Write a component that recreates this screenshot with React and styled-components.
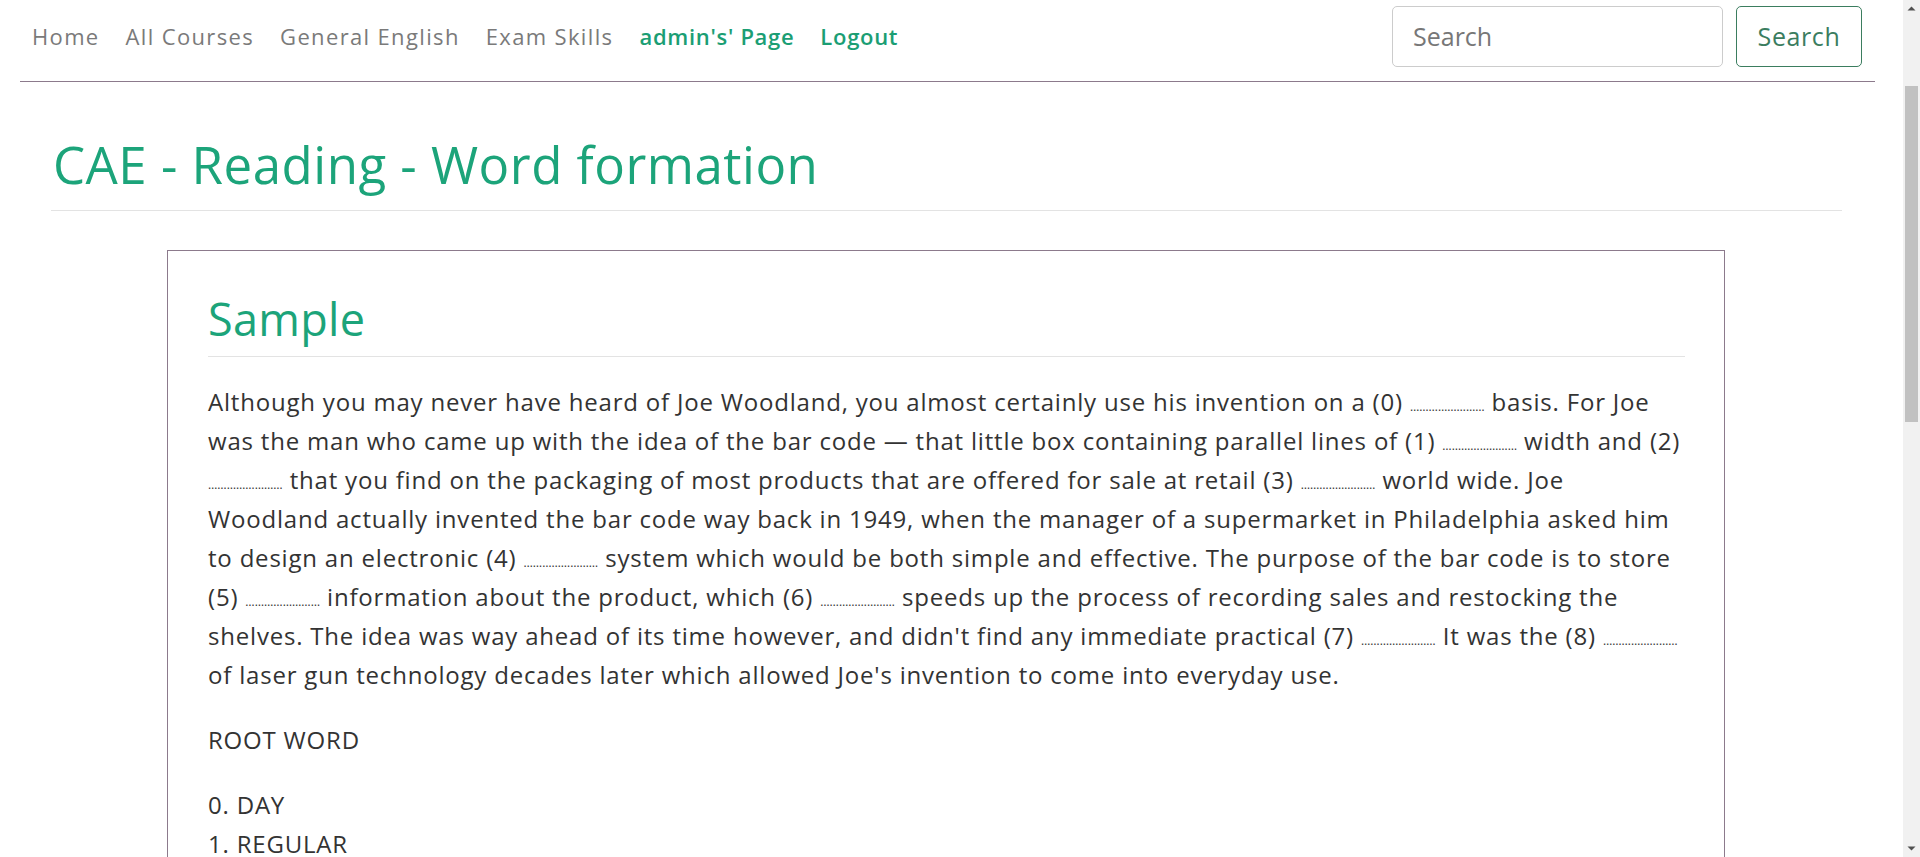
import React, { useState } from 'react';
import styled, { createGlobalStyle } from 'styled-components';

const GlobalStyle = createGlobalStyle`
  html, body {
    margin: 0;
    padding: 0;
    background: #fff;
  }
  body {
    font-family: "Open Sans", Lato, sans-serif;
    color: #333;
    padding-right: 17px;
  }
  * {
    box-sizing: border-box;
  }
`;

const links = [
  { label: 'Home' },
  { label: 'All Courses' },
  { label: 'General English' },
  { label: 'Exam Skills' },
  { label: "admin's' Page", active: true },
  { label: 'Logout', active: true },
];

const rootWords = [
  '0. DAY',
  '1. REGULAR',
  '2. VARY',
  '3. OUTLET',
  '4. CHECK',
  '5. ESSENCE',
  '6. CONSIDER',
  '7. APPLY',
  '8. ARRIVE',
];

const gap = '……………………';

function Arrow({ down }) {
  return (
    <svg width="17" height="17" viewBox="0 0 17 17">
      <polygon
        points={down ? '4.5,6.5 12.5,6.5 8.5,10.5' : '4.5,10.5 12.5,10.5 8.5,6.5'}
        fill="#505050"
      />
    </svg>
  );
}

function App() {
  const [query, setQuery] = useState('');

  return (
    <>
      <GlobalStyle />
      <Navbar>
        <NavLinks>
          {links.map((l) => (
            <NavLink key={l.label} href="#" $active={l.active}>
              {l.label}
            </NavLink>
          ))}
        </NavLinks>
        <SearchForm onSubmit={(e) => e.preventDefault()}>
          <SearchInput
            type="text"
            placeholder="Search"
            value={query}
            onChange={(e) => setQuery(e.target.value)}
          />
          <SearchButton type="submit">Search</SearchButton>
        </SearchForm>
      </Navbar>

      <Container>
        <PageTitle>CAE - Reading - Word formation</PageTitle>

        <Card>
          <CardTitle>Sample</CardTitle>
          <Text>
            Although you may never have heard of Joe Woodland, you almost certainly use his
            invention on a (0) <Dots>{gap}</Dots> basis. For Joe was the man who came up with
            the idea of the bar code — that little box containing parallel lines of (1){' '}
            <Dots>{gap}</Dots> width and (2) <Dots>{gap}</Dots> that you find on the packaging
            of most products that are offered for sale at retail (3) <Dots>{gap}</Dots> world
            wide. Joe Woodland actually invented the bar code way back in 1949, when the manager
            of a supermarket in Philadelphia asked him to design an electronic (4){' '}
            <Dots>{gap}</Dots> system which would be both simple and effective. The purpose of
            the bar code is to store (5) <Dots>{gap}</Dots> information about the product, which
            (6) <Dots>{gap}</Dots> speeds up the process of recording sales and restocking the
            shelves. The idea was way ahead of its time however, and didn't find any immediate
            practical (7) <Dots>{gap}</Dots> It was the (8) <Dots>{gap}</Dots> of laser gun
            technology decades later which allowed Joe's invention to come into everyday use.
          </Text>
          <Text>ROOT WORD</Text>
          <WordList>
            {rootWords.map((w) => (
              <li key={w}>{w}</li>
            ))}
          </WordList>
        </Card>
      </Container>

      <ScrollRail aria-hidden="true">
        <Arrow />
        <ScrollTrack>
          <ScrollThumb />
        </ScrollTrack>
        <Arrow down />
      </ScrollRail>
    </>
  );
}

const Navbar = styled.nav`
  display: flex;
  justify-content: space-between;
  align-items: center;
  height: 82px;
  margin: 0 28px 0 20px;
  padding: 0 13px 9px 12px;
  border-bottom: 1px solid #8c7a8c;
`;

const NavLinks = styled.div`
  display: flex;
  align-items: center;
  gap: 26px;
`;

const NavLink = styled.a`
  font-size: 22px;
  letter-spacing: ${(p) => (p.$active ? '0.7px' : '1.35px')};
  text-decoration: none;
  color: ${(p) => (p.$active ? '#1b9e74' : '#7a7a7a')};
  font-weight: ${(p) => (p.$active ? 600 : 400)};
`;

const SearchForm = styled.form`
  display: flex;
  align-items: center;
  gap: 13px;
`;

const SearchInput = styled.input`
  width: 331px;
  height: 61px;
  padding: 0 20px;
  border: 1px solid #ccc;
  border-radius: 5px;
  font-family: inherit;
  font-size: 25px;
  color: #555;

  &::placeholder {
    color: #777;
  }
`;

const SearchButton = styled.button`
  width: 126px;
  height: 61px;
  padding: 0;
  background: #fff;
  border: 1px solid #3b7d5f;
  border-radius: 5px;
  font-family: inherit;
  font-size: 25px;
  letter-spacing: 0.6px;
  color: #3b7d5f;
  cursor: pointer;
`;

const Container = styled.main`
  padding: 0 61px 950px 51px;
`;

const PageTitle = styled.h1`
  margin: 52px 0 39px;
  padding: 0 0 15px 2px;
  font-size: 51px;
  letter-spacing: 0.5px;
  font-weight: 400;
  line-height: 1.2;
  color: #1ca47a;
  border-bottom: 1px solid #e3e3e3;
`;

const Card = styled.section`
  margin: 0 117px 0 116px;
  padding: 41px 39px 20px 40px;
  border: 1px solid #8c7a8c;
`;

const CardTitle = styled.h2`
  margin: 0 0 25px;
  padding-bottom: 10px;
  font-size: 45px;
  letter-spacing: 0.3px;
  font-weight: 400;
  line-height: 1.2;
  color: #1ca47a;
  border-bottom: 1px solid #e3e3e3;
`;

const Text = styled.p`
  margin: 0 0 26px;
  font-size: 24px;
  letter-spacing: 0.8px;
  line-height: 39px;
  color: #333;
`;

const Dots = styled.span`
  font-size: 12px;
  line-height: 1;
  letter-spacing: 0;
`;

const WordList = styled.ul`
  margin: 0;
  padding: 0;
  list-style: none;
  font-size: 24px;
  letter-spacing: 0.8px;
  line-height: 39px;
`;

const ScrollRail = styled.div`
  position: fixed;
  top: 0;
  right: 0;
  bottom: 0;
  width: 17px;
  display: flex;
  flex-direction: column;
  background: #f1f1f1;
`;

const ScrollTrack = styled.div`
  flex: 1;
  padding: 69px 2px 0;
`;

const ScrollThumb = styled.div`
  height: 336px;
  background: #c1c1c1;
`;

export default App;
